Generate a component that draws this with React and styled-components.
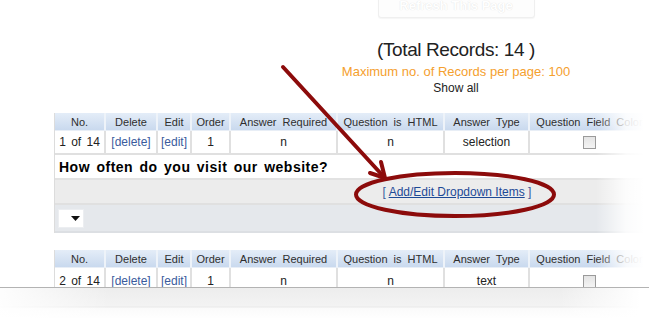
import React from 'react';
import styled, { createGlobalStyle } from 'styled-components';

const Global = createGlobalStyle`
  html, body { margin: 0; padding: 0; background: #fff; }
  body { font-family: "Liberation Sans", Arial, sans-serif; }
`;

const Page = styled.div`
  position: relative;
  width: 649px;
  height: 318px;
  overflow: hidden;
  background: #fff;
`;

const Content = styled.div`
  margin-left: 54px;
  width: 804px;
  display: flex;
  flex-direction: column;
`;

const TopBar = styled.div`
  height: 18px;
  display: flex;
  justify-content: center;
`;

const RefreshButton = styled.div`
  width: 157px;
  height: 25px;
  margin-top: -7px;
  box-sizing: border-box;
  border: 1px solid #efefef;
  border-radius: 3px;
  background: #fdfdfd;
  color: #fff;
  text-shadow: 0 0 1px #d8d8d8;
  font-weight: bold;
  font-size: 13px;
  display: flex;
  align-items: center;
  justify-content: center;
  box-shadow: 0 1px 1px rgba(0, 0, 0, 0.04);
`;

const Summary = styled.div`
  margin-top: 20px;
  display: flex;
  flex-direction: column;
  align-items: center;
`;

const TotalRecords = styled.div`
  font-size: 19px;
  line-height: 24px;
  letter-spacing: -0.4px;
  color: #222;
`;

const MaxRecords = styled.div`
  margin-top: 2px;
  font-size: 13px;
  line-height: 16px;
  color: #f5a02e;
`;

const ShowAll = styled.a`
  font-size: 12px;
  line-height: 16px;
  color: #222;
  text-decoration: none;
`;

const Grid = styled.table`
  border-collapse: separate;
  border-spacing: 0;
  width: 804px;
  table-layout: fixed;
  margin-top: ${(p) => p.$top}px;
  border-left: 1px solid #dcdcdc;
`;

const Col = styled.col`
  width: ${(p) => p.$w}px;
`;

const HeadRow = styled.tr`
  height: 18px;
`;

const HeadCell = styled.th`
  padding: 0;
  font-size: 11px;
  font-weight: normal;
  color: #2e2e2e;
  word-spacing: 3px;
  white-space: nowrap;
  overflow: hidden;
  text-align: center;
  background: linear-gradient(#e4edf8, #c9d9ee);
  border-right: 2px solid #eef3f9;
  border-bottom: 1px solid #e8eef6;
`;

const DataRow = styled.tr`
  height: 24px;
`;

const DataCell = styled.td`
  padding: ${(p) => (p.$low ? '3px 0 0' : '0')};
  font-size: 12px;
  color: #222;
  word-spacing: 2px;
  text-align: center;
  white-space: nowrap;
  background: #fff;
  border-right: 2px solid #e0e0e0;
  border-bottom: 2px solid #e0e0e0;
`;

const ActionLink = styled.a`
  color: #3a5b9d;
  text-decoration: none;
`;

const Checkbox = styled.span`
  display: inline-block;
  width: 11px;
  height: 11px;
  border: 1px solid #9a9a9a;
  background: linear-gradient(#e4e4e4, #f4f4f4);
  vertical-align: middle;
`;

const QuestionRow = styled.tr`
  height: 25px;
`;

const QuestionCell = styled.td`
  padding: 0 0 0 4px;
  font-size: 14px;
  font-weight: bold;
  letter-spacing: 0.5px;
  word-spacing: 2px;
  color: #000;
  background: #fff;
  border-bottom: 2px solid #e2e2e2;
`;

const LinkRow = styled.tr`
  height: 25px;
`;

const LinkCell = styled.td`
  padding: 0;
  font-size: 12px;
  text-align: center;
  color: #3a5b9d;
  background: #ececec;
  border-bottom: 2px solid #e0e0e0;
`;

const DropdownLink = styled.a`
  color: #1d4a97;
  text-decoration: underline;
`;

const SelectRow = styled.tr`
  height: 28px;
`;

const SelectCell = styled.td`
  padding: 0 0 0 3px;
  background: #e5e8ec;
  border-bottom: 2px solid #dcdfe3;
`;

const FakeSelect = styled.span`
  display: flex;
  align-items: center;
  justify-content: center;
  width: 26px;
  height: 19px;
  background: #fff;
  border: 1px solid #eceef1;
  box-sizing: border-box;
  padding-left: 8px;
`;

const Overlay = styled.svg`
  position: absolute;
  left: 0;
  top: 0;
  pointer-events: none;
`;

const RightFade = styled.div`
  position: absolute;
  top: 0;
  bottom: 0;
  left: 596px;
  width: 53px;
  background: linear-gradient(to right, rgba(255, 255, 255, 0), rgba(255, 255, 255, 0.85) 30px, #fff 48px);
  pointer-events: none;
`;

const BottomEdge = styled.div`
  position: absolute;
  left: 0;
  right: 0;
  top: 287px;
  bottom: 0;
  border-top: 1px solid #b3b3b3;
  background:
    linear-gradient(to right, rgba(255, 255, 255, 0.9), rgba(255, 255, 255, 0) 110px, rgba(255, 255, 255, 0) 560px, #fff 640px),
    linear-gradient(#ededed 0, #f3f3f3 18px, #e9e9e9 19px, #fafafa 20px, #fff 31px);
  pointer-events: none;
`;

const columns = [51, 52, 34, 39, 107, 107, 85, 121, 208];
const headers = ['No.', 'Delete', 'Edit', 'Order', 'Answer Required', 'Question is HTML', 'Answer Type', 'Question Field Color', 'Answer Field Color'];

function Header() {
  return (
    <>
      <colgroup>
        {columns.map((w, i) => (
          <Col key={i} $w={w} />
        ))}
      </colgroup>
      <thead>
        <HeadRow>
          {headers.map((h) => (
            <HeadCell key={h}>{h}</HeadCell>
          ))}
        </HeadRow>
      </thead>
    </>
  );
}

function Record({ no, type, low }) {
  return (
    <DataRow>
      <DataCell $low={low}>{no} of 14</DataCell>
      <DataCell $low={low}><ActionLink>[delete]</ActionLink></DataCell>
      <DataCell $low={low}><ActionLink>[edit]</ActionLink></DataCell>
      <DataCell $low={low}>1</DataCell>
      <DataCell $low={low}>n</DataCell>
      <DataCell $low={low}>n</DataCell>
      <DataCell $low={low}>{type}</DataCell>
      <DataCell $low={low}><Checkbox /></DataCell>
      <DataCell $low={low}><Checkbox /></DataCell>
    </DataRow>
  );
}

export default function App() {
  return (
    <Page>
      <Global />
      <Content>
        <TopBar>
          <RefreshButton>Refresh This Page</RefreshButton>
        </TopBar>
        <Summary>
          <TotalRecords>(Total Records: 14 )</TotalRecords>
          <MaxRecords>Maximum no. of Records per page: 100</MaxRecords>
          <ShowAll>Show all</ShowAll>
        </Summary>
        <Grid $top={17}>
          <Header />
          <tbody>
            <Record no={1} type="selection" />
            <QuestionRow>
              <QuestionCell colSpan={9}>How often do you visit our website?</QuestionCell>
            </QuestionRow>
            <LinkRow>
              <LinkCell colSpan={9}>
                [ <DropdownLink>Add/Edit Dropdown Items</DropdownLink> ]
              </LinkCell>
            </LinkRow>
            <SelectRow>
              <SelectCell colSpan={9}>
                <FakeSelect>
                  <svg width="9" height="5" viewBox="0 0 9 5">
                    <path d="M0 0 L9 0 L4.5 5 Z" fill="#111" />
                  </svg>
                </FakeSelect>
              </SelectCell>
            </SelectRow>
          </tbody>
        </Grid>
        <Grid $top={17}>
          <Header />
          <tbody>
            <Record no={2} type="text" low />
          </tbody>
        </Grid>
      </Content>
      <RightFade />
      <BottomEdge />
      <Overlay width="649" height="318" viewBox="0 0 649 318">
        <g stroke="#8c0b0b" fill="none" strokeLinecap="round" strokeLinejoin="round">
          <line x1="283" y1="67" x2="384" y2="177" strokeWidth="4" />
          <polyline points="381,162 385,178 370,173" strokeWidth="4" />
          <ellipse cx="455" cy="194.5" rx="99" ry="21.5" strokeWidth="4" />
        </g>
      </Overlay>
    </Page>
  );
}
